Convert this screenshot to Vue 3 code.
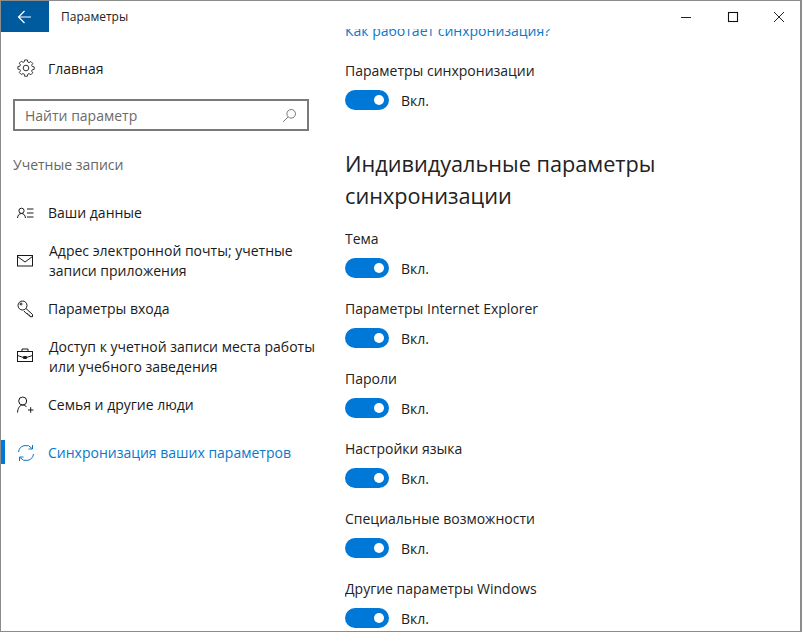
<script setup>
const nav = [
  { id: 'user', lines: 'Ваши данные' },
  { id: 'mail', lines: 'Адрес электронной почты; учетные записи приложения', wide: true },
  { id: 'key', lines: 'Параметры входа' },
  { id: 'case', lines: 'Доступ к учетной записи места работы или учебного заведения', wide: true },
  { id: 'family', lines: 'Семья и другие люди' },
  { id: 'sync', lines: 'Синхронизация ваших параметров', active: true }
]
const settings = ['Тема', 'Параметры Internet Explorer', 'Пароли', 'Настройки языка', 'Специальные возможности', 'Другие параметры Windows']
</script>

<template>
  <div class="window">
    <header class="titlebar">
      <button class="back" aria-label="Назад">
        <svg width="16" height="16" viewBox="0 0 16 16" fill="none" stroke="#fff" stroke-width="1.2"><path d="M1.500 8H14M7.500 2 1.500 8l6 6" /></svg>
      </button>
      <span class="title">Параметры</span>
      <div class="controls">
        <svg width="12" height="12" viewBox="0 0 12 12" stroke="#222" fill="none"><path d="M0 6.500h10" /></svg>
        <svg width="12" height="12" viewBox="0 0 12 12" stroke="#111" fill="none" stroke-width="1.100"><rect x="1.500" y="1.500" width="9" height="9" /></svg>
        <svg width="12" height="12" viewBox="0 0 12 12" stroke="#222" fill="none"><path d="m1 1 10 10M11 1 1 11" /></svg>
      </div>
    </header>
    <div class="body">
      <aside class="side">
        <div class="home">
          <svg class="ico" width="18" height="18" viewBox="0 0 18 18" fill="none" stroke="#333" stroke-width="1"><circle cx="9" cy="9" r="2.800" /><path d="M7.600 1h2.800l.4 2.200 1.300.6 1.900-1.200 2 2-1.200 1.900.6 1.300 2.100.4v2.600l-2.100.4-.6 1.300 1.200 1.900-2 2-1.900-1.200-1.300.6-.4 2.200H7.600l-.4-2.200-1.300-.6L4 16.100l-2-2 1.200-1.900-.6-1.300L.5 10.500V7.900l2.100-.4.6-1.300L2 4.300l2-2 1.900 1.200 1.300-.6z" transform="translate(.4 0) scale(.96)" /></svg>
          <span>Главная</span>
        </div>
        <div class="search">
          <span>Найти параметр</span>
          <svg width="15" height="15" viewBox="0 0 15 15" fill="none" stroke="#777"><circle cx="9.200" cy="5.800" r="4.300" /><path d="M6 9 1.200 13.800" /></svg>
        </div>
        <div class="group">Учетные записи</div>
        <nav class="nav">
          <div v-for="item in nav" :key="item.id" class="item" :class="{ active: item.active, wide: item.wide }">
            <svg class="ico" width="18" height="18" viewBox="0 0 18 18" fill="none" stroke="currentColor" stroke-width="1">
              <template v-if="item.id === 'user'"><circle cx="4.500" cy="6.800" r="2.600" /><path d="M.5 14c.3-2.800 1.800-4.500 4-4.500s3.700 1.700 4 4.500M10 5h6.500M10 9h6.500M10 13h6.500" /></template>
              <template v-else-if="item.id === 'mail'"><rect x=".5" y="3.500" width="15" height="10.500" /><path d="m.5 4.500 7.500 5.500 7.500-5.500" /></template>
              <template v-else-if="item.id === 'key'"><circle cx="5.500" cy="5.500" r="4.500" /><circle cx="4" cy="4" r="1" /><path d="m9 8.500 6.500 6v2.200h-2.500l-.5-1.700h-1.500l-.5-1.500-1.500-.2-2-2.300" /></template>
              <template v-else-if="item.id === 'case'"><rect x=".5" y="3.500" width="15" height="10" /><path d="M5 3.500v-2.500h6v2.500M.5 7.500l6 2h3l6-2M6.500 8.500h3v2h-3z" /></template>
              <template v-else-if="item.id === 'family'"><circle cx="5.700" cy="5" r="4" /><path d="M.5 16.500c.4-4.200 2-7.500 5.200-7.500 1.500 0 3 .7 3.800 2M11 14h5.500M13.700 11.200v5.600" /></template>
              <template v-else><path d="M1.500 8A7.500 7.500 0 0 1 15 4.500M16.500 10A7.500 7.500 0 0 1 3 13.500M15.500 1v4h-4M2.500 17v-4h4" /></template>
            </svg>
            <span>{{ item.lines }}</span>
          </div>
        </nav>
      </aside>
      <main class="main">
        <div class="scroll">
          <a class="link">Как работает синхронизация?</a>
          <div class="setting first">
            <div class="label">Параметры синхронизации</div>
            <div class="toggle-row"><span class="toggle"><i /></span><span>Вкл.</span></div>
          </div>
          <h2>Индивидуальные параметры синхронизации</h2>
          <div v-for="s in settings" :key="s" class="setting">
            <div class="label">{{ s }}</div>
            <div class="toggle-row"><span class="toggle"><i /></span><span>Вкл.</span></div>
          </div>
        </div>
      </main>
    </div>
  </div>
</template>

<style>
html, body { margin: 0; background: #fff; }
</style>

<style scoped>
.window {
  width: 802px; height: 632px; box-sizing: border-box; overflow: hidden;
  display: flex; flex-direction: column; background: #fff; color: #1a1a1a;
  border: 1px solid #8c8c8c; border-right-width: 2px;
  font-family: "Open Sans", "Noto Sans", sans-serif; font-size: 14px;
}
.titlebar { height: 31px; flex: none; display: flex; align-items: center; background: #fff; }
.back { width: 48px; height: 31px; border: 0; padding: 0; background: #005a9e; display: flex; align-items: center; justify-content: center; }
.title { margin-left: 12px; font-size: 12px; color: #222; }
.controls { margin-left: auto; display: flex; align-items: center; gap: 34px; padding-right: 15px; }
.body { flex: 1; display: flex; min-height: 0; }
.side { width: 344px; flex: none; }
.ico { flex: none; }
.home { display: flex; align-items: center; gap: 13px; height: 24px; margin: 24px 0 0 16px; }
.search {
  box-sizing: border-box; width: 296px; height: 32px; margin: 19px 0 0 12px; padding: 0 10px;
  border: 2px solid #7a7a7a; display: flex; align-items: center; justify-content: space-between;
  color: #6b6b6b;
}
.group { margin: 24px 0 0 12px; color: #666; line-height: 20px; }
.nav { margin-top: 14px; }
.item { display: flex; align-items: center; gap: 13px; height: 48px; padding-left: 16px; position: relative; line-height: 20px; }
.item.wide { gap: 14px; }
.item span { width: 280px; }
.item.active { color: #0a78c8; }
.item.active::before { content: ""; position: absolute; left: 0; top: 11px; width: 4px; height: 24px; background: #0078d7; }
.main { flex: 1; min-width: 0; overflow: hidden; margin-top: -3px; }
.scroll { margin-top: -8px; }
.link { display: block; height: 20px; line-height: 20px; color: #0a78c8; }
.setting { height: 70px; box-sizing: border-box; }
.setting.first { margin-top: 20px; height: 54px; }
.label { height: 20px; line-height: 20px; color: #222; }
.toggle-row { display: flex; align-items: center; gap: 12px; margin-top: 9px; height: 20px; }
.toggle { width: 44px; height: 20px; border-radius: 10px; background: #0078d7; display: flex; align-items: center; justify-content: flex-end; padding-right: 5px; box-sizing: border-box; }
.toggle i { width: 10px; height: 10px; border-radius: 50%; background: #fff; }
h2 { margin: 33px 0 17px; width: 360px; font-size: 21.7px; font-weight: 400; line-height: 32px; color: #222; }
</style>
